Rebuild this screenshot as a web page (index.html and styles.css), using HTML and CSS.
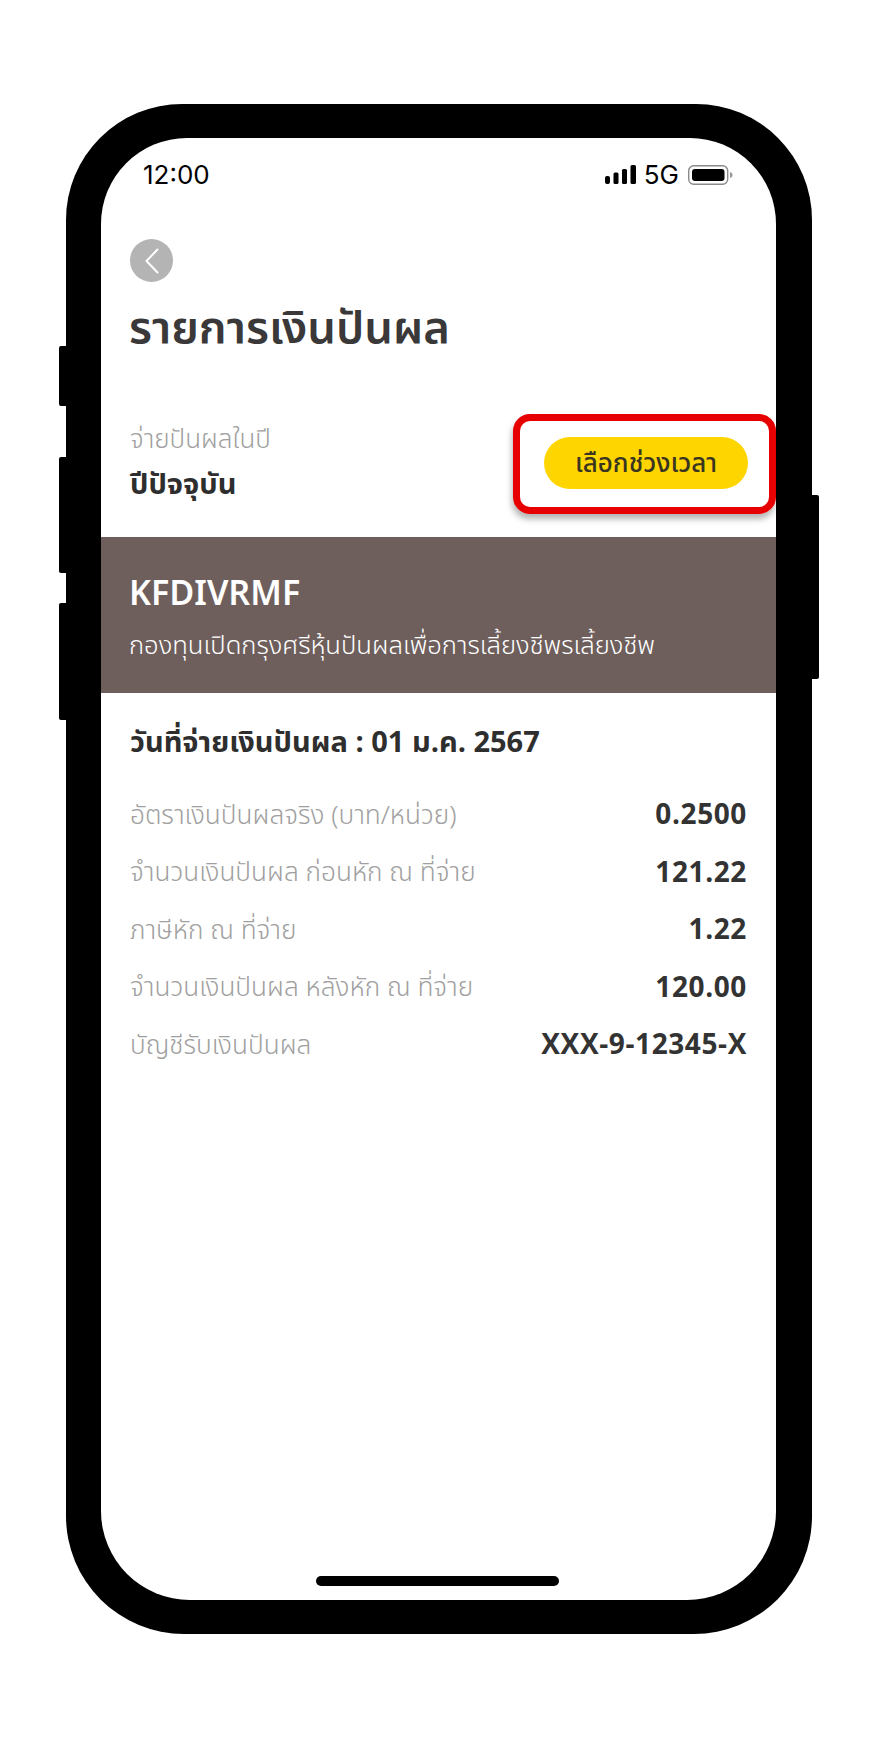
FILE: index.html
```html
<!DOCTYPE html>
<html lang="th">
<head>
<meta charset="utf-8">
<title>รายการเงินปันผล</title>
<link rel="stylesheet" href="styles.css">
</head>
<body>
<div class="phone">
  <span class="side side-l side-1"></span>
  <span class="side side-l side-2"></span>
  <span class="side side-l side-3"></span>
  <span class="side side-r"></span>
  <main class="screen">
    <div class="status">
      <span class="time">12:00</span>
      <div class="status-right">
        <svg class="signal" width="31" height="19" viewBox="0 0 31 19"><rect x="0" y="11" width="5" height="8" rx="2"/><rect x="8.500" y="7.500" width="5" height="11.500" rx="1.500"/><rect x="17" y="4" width="5" height="15" rx="1.500"/><rect x="25.500" y="0" width="5.500" height="19" rx="1.500"/></svg>
        <span class="net">5G</span>
        <svg class="battery" width="45" height="20" viewBox="0 0 45 20"><rect x="0.700" y="0.700" width="39" height="18.600" rx="5" fill="none" stroke="#8a8a8a" stroke-width="1.400"/><rect x="4" y="4" width="32.500" height="12" rx="3" fill="#000"/><path d="M42 7c1.700.4 2.500 1.500 2.500 3s-.8 2.600-2.500 3z" fill="#9a9a9a"/></svg>
      </div>
    </div>
    <section class="head">
      <button class="back" aria-label="back"><svg width="14" height="26" viewBox="0 0 14 26"><path d="M12.500 1.500 1.500 13l11 11.500" fill="none" stroke="#fff" stroke-width="2" stroke-linecap="round" stroke-linejoin="round"/></svg></button>
      <h1 class="title">รายการเงินปันผล</h1>
    </section>
    <section class="period">
      <div class="period-text">
        <div class="period-label">จ่ายปันผลในปี</div>
        <div class="period-value">ปีปัจจุบัน</div>
      </div>
      <div class="highlight"><button class="pick">เลือกช่วงเวลา</button></div>
    </section>
    <section class="band">
      <div class="fund-code">KFDIVRMF</div>
      <div class="fund-name">กองทุนเปิดกรุงศรีหุ้นปันผลเพื่อการเลี้ยงชีพรเลี้ยงชีพ</div>
    </section>
    <section class="detail">
      <h2 class="date">วันที่จ่ายเงินปันผล : 01 ม.ค. 2567</h2>
      <div class="row"><span class="k">อัตราเงินปันผลจริง (บาท/หน่วย)</span><span class="v">0.2500</span></div>
      <div class="row"><span class="k">จำนวนเงินปันผล ก่อนหัก ณ ที่จ่าย</span><span class="v">121.22</span></div>
      <div class="row"><span class="k">ภาษีหัก ณ ที่จ่าย</span><span class="v">1.22</span></div>
      <div class="row"><span class="k">จำนวนเงินปันผล หลังหัก ณ ที่จ่าย</span><span class="v">120.00</span></div>
      <div class="row"><span class="k">บัญชีรับเงินปันผล</span><span class="v">XXX-9-12345-X</span></div>
    </section>
    <div class="home"></div>
  </main>
</div>
</body>
</html>
```
FILE: styles.css
```css
* { box-sizing: border-box; }
html, body { margin: 0; background: #fff; }
body { padding: 104px 0 0 66px; height: 1740px; overflow: hidden; font-family: "Noto Sans Thai", "Noto Sans", "Open Sans", sans-serif; color: #333; }
.phone { position: relative; width: 746px; height: 1530px; background: #000; border-radius: 116px 116px 118px 118px; padding: 34px 36px 34px 35px; }
.side { position: absolute; background: #000; border-radius: 2px; }
.side-l { left: -7px; width: 20px; }
.side-1 { top: 242px; height: 60px; }
.side-2 { top: 353px; height: 116px; }
.side-3 { top: 499px; height: 117px; }
.side-r { right: -7px; top: 391px; width: 20px; height: 184px; }
.screen { position: relative; height: 100%; background: #fff; border-radius: 86px 86px 89px 89px; overflow: hidden; display: flex; flex-direction: column; }
.status { height: 101px; padding: 23px 43px 0 42px; display: flex; justify-content: space-between; align-items: flex-start; color: #000; }
.time { font: 400 26px/27px Inter, sans-serif; }
.status-right { display: flex; align-items: center; gap: 8px; height: 27px; }
.net { font: 400 26px/27px Inter, sans-serif; }
.battery { margin-left: 1px; }
.signal, .battery { display: block; }
.head { padding: 0 28px; }
.back { display: flex; align-items: center; justify-content: center; width: 43px; height: 43px; margin-left: 1px; padding: 0; border: 0; border-radius: 50%; background: #b4b4b4; }
.title { margin: 17px 0 0; font-size: 45.300px; line-height: 60px; font-weight: 600; color: #3a3838; }
.period { height: 123px; padding: 0 0 0 29px; display: flex; justify-content: space-between; margin-top: 55px; }
.period-label { font-size: 26px; line-height: 36px; font-weight: 300; color: #a0a0a0; margin-top: 8px; }
.period-value { font-size: 29px; line-height: 44px; font-weight: 700; color: #2e2e2e; margin-top: 5px; }
.highlight { width: 263px; height: 100px; padding: 16px 21px 0 24px; border: 7px solid #e60000; border-radius: 17px; box-shadow: -1px 5px 6px rgba(0,0,0,.3); }
.pick { display: block; width: 100%; height: 52px; border: 0; border-radius: 26px; background: #ffd500; color: #3a3520; font: 500 26px/54px "Noto Sans Thai", "Noto Sans", sans-serif; padding: 0; }
.band { height: 156px; padding: 34px 28px 0; background: #6e5f5d; color: #fff; }
.fund-code { font-size: 34px; line-height: 48px; font-weight: 600; }
.fund-name { font-size: 25.600px; line-height: 44px; font-weight: 300; margin-top: 6px; }
.detail { padding: 28px 29px 0; }
.date { margin: 0 0 22px; font-size: 29px; line-height: 44px; font-weight: 700; color: #2e2e2e; }
.row { display: flex; justify-content: space-between; align-items: center; height: 57.500px; }
.k { font-size: 26.200px; font-weight: 300; color: #a0a0a0; }
.v { font-size: 28px; font-weight: 700; color: #333; letter-spacing: .6px; }
.home { position: absolute; left: 215px; bottom: 14px; width: 243px; height: 10px; border-radius: 5px; background: #000; }
```
